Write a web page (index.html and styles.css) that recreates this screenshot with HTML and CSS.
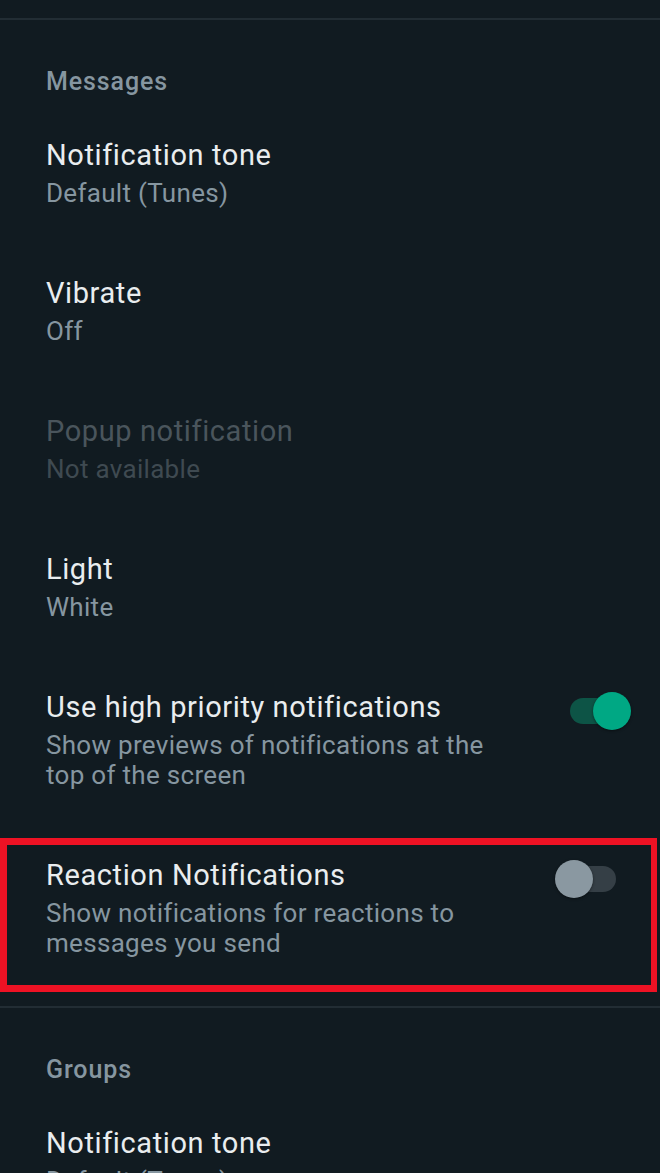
FILE: index.html
```html
<!DOCTYPE html>
<html>
<head>
<meta charset="utf-8">
<link rel="stylesheet" href="styles.css">
</head>
<body>
<div class="screen">
  <div class="divider first"></div>
  <section class="section">
    <div class="header">Messages</div>
    <div class="item">
      <div class="text">
        <div class="title">Notification tone</div>
        <div class="sub">Default (Tunes)</div>
      </div>
    </div>
    <div class="item">
      <div class="text">
        <div class="title">Vibrate</div>
        <div class="sub">Off</div>
      </div>
    </div>
    <div class="item disabled">
      <div class="text">
        <div class="title">Popup notification</div>
        <div class="sub">Not available</div>
      </div>
    </div>
    <div class="item">
      <div class="text">
        <div class="title">Light</div>
        <div class="sub">White</div>
      </div>
    </div>
    <div class="item">
      <div class="text">
        <div class="title">Use high priority notifications</div>
        <div class="sub">Show previews of notifications at the top of the screen</div>
      </div>
      <div class="switch on"><span class="track"></span><span class="knob"></span></div>
    </div>
    <div class="item highlight">
      <div class="text">
        <div class="title">Reaction Notifications</div>
        <div class="sub">Show notifications for reactions to messages you send</div>
      </div>
      <div class="switch off"><span class="track"></span><span class="knob"></span></div>
    </div>
  </section>
  <div class="divider"></div>
  <section class="section">
    <div class="header">Groups</div>
    <div class="item">
      <div class="text">
        <div class="title">Notification tone</div>
        <div class="sub">Default (Tunes)</div>
      </div>
    </div>
  </section>
</div>
</body>
</html>
```

FILE: styles.css
```css
html, body {
  margin: 0;
  padding: 0;
  background: #111b21;
}
body {
  font-family: Roboto, "Noto Sans", "Liberation Sans", sans-serif;
  width: 660px;
  height: 1173px;
  overflow: hidden;
}
.screen {
  display: flex;
  flex-direction: column;
}
.divider {
  height: 2px;
  background: #222d34;
}
.divider.first {
  margin-top: 18px;
}
.section {
  display: flex;
  flex-direction: column;
  padding-bottom: 15px;
}
.header {
  padding: 47px 46px 6px;
  font-size: 25px;
  line-height: 30px;
  font-weight: 500;
  letter-spacing: 0.9px;
  color: #8696a0;
}
.item {
  position: relative;
  display: flex;
  align-items: flex-start;
  justify-content: space-between;
  padding: 32px 0 33px 46px;
}
.text {
  width: 470px;
}
.title {
  font-size: 29px;
  line-height: 40px;
  letter-spacing: 0.6px;
  color: #e9edef;
}
.sub {
  margin-top: 3px;
  font-size: 26px;
  line-height: 30px;
  letter-spacing: 0.3px;
  color: #8696a0;
}
.disabled .title {
  color: #4a555c;
}
.disabled .sub {
  color: #3f4a51;
}
.switch {
  position: relative;
  width: 76px;
  height: 38px;
  margin-top: 5px;
  margin-right: 29px;
}
.switch .track {
  position: absolute;
  left: 15px;
  top: 6px;
  width: 46px;
  height: 26px;
  border-radius: 13px;
}
.switch .knob {
  position: absolute;
  top: 0;
  width: 38px;
  height: 38px;
  border-radius: 50%;
  box-shadow: 0 1px 3px rgba(0, 0, 0, 0.45);
}
.switch.on .track {
  background: #0d5446;
}
.switch.on .knob {
  left: 38px;
  background: #00a884;
}
.switch.off .track {
  background: #353f46;
}
.switch.off .knob {
  left: 0;
  background: #8a98a1;
}
.highlight::after {
  content: "";
  position: absolute;
  left: 0;
  right: 3px;
  top: 15px;
  bottom: -1px;
  border: 7px solid #ee1224;
  border-right-width: 6px;
  pointer-events: none;
}
```
